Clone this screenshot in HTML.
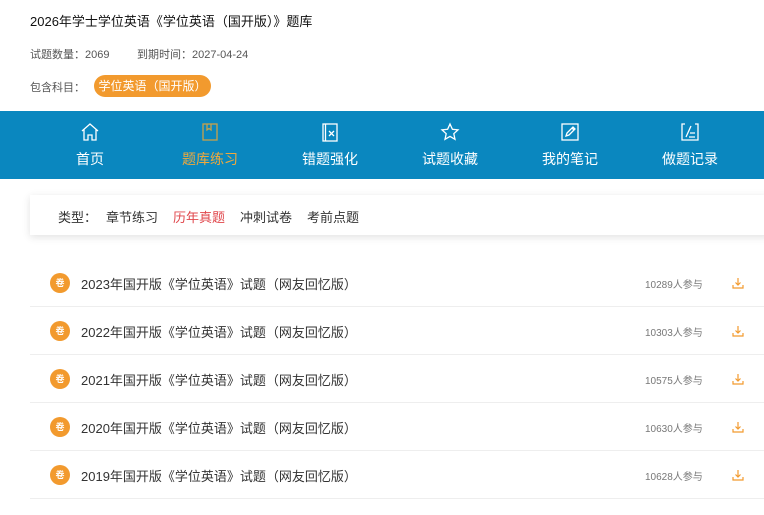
<!DOCTYPE html><html><head><meta charset="utf-8"><style>
body{margin:0;width:764px;height:515px;overflow:hidden;background:#fff;font-family:"Liberation Sans","Noto Sans CJK SC",sans-serif;position:relative}
.a{position:absolute;white-space:nowrap}
.nav{position:absolute;left:0;top:111px;width:764px;height:68px;background:#0a87bf}
.it{position:absolute;top:0;width:120px;height:68px;text-align:center;color:#fff;font-size:14px}
.it svg{position:absolute;left:50px;top:11px}
.it span{position:absolute;left:0;right:0;top:38px}
.row{position:absolute;left:30px;width:734px;height:47px;border-bottom:1px solid #eee}
.ic{position:absolute;left:20px;top:14px;width:20px;height:20px;border-radius:50%;background:#f29a2e;color:#fff;font-size:9px;text-align:center;line-height:20px;font-weight:bold}
.t{position:absolute;left:51px;top:15px;font-size:13px;color:#333}
.n{position:absolute;left:615px;top:17px;font-size:10px;color:#777}
.d{position:absolute;left:701px;top:17px}
</style></head><body>
<div class="a" style="left:30px;top:11px;font-size:13px;color:#111">2026年学士学位英语《学位英语（国开版）》题库</div>
<div class="a" style="left:30px;top:46px;font-size:11px;color:#555">试题数量：2069</div>
<div class="a" style="left:137px;top:46px;font-size:11px;color:#555">到期时间：2027-04-24</div>
<div class="a" style="left:30px;top:79px;font-size:11px;color:#555">包含科目：</div>
<div class="a" style="left:94px;top:75px;width:117px;height:22px;border-radius:11px;background:#f29a2e;color:#fff;font-size:12px;line-height:22px;text-align:center">学位英语（国开版）</div>
<div class="nav">
<div class="it" style="left:30px"><svg width="20" height="20" viewBox="0 0 20 20" fill="none" stroke="#fff" stroke-width="1.3"><path d="M2 9L10 2l8 7M4 7.5V18h4v-5h4v5h4V7.5"/></svg><span>首页</span></div>
<div class="it" style="left:150px;color:#f1a93c"><svg width="20" height="20" viewBox="0 0 20 20" fill="none" stroke="#c8a24a" stroke-width="1.3"><rect x="3" y="2" width="14" height="16"/><path d="M7 2v6l2-1.5L11 8V2"/></svg><span>题库练习</span></div>
<div class="it" style="left:270px"><svg width="20" height="20" viewBox="0 0 20 20" fill="none" stroke="#fff" stroke-width="1.3"><rect x="3" y="2" width="14" height="17"/><path d="M5.5 2v17M9 9l5 5M14 9l-5 5"/></svg><span>错题强化</span></div>
<div class="it" style="left:390px"><svg width="20" height="20" viewBox="0 0 20 20" fill="none" stroke="#fff" stroke-width="1.3"><path d="M10 2l2.4 5.3 5.6.6-4.2 3.8 1.2 5.6L10 14.4 5 17.3l1.2-5.6L2 7.9l5.6-.6z"/></svg><span>试题收藏</span></div>
<div class="it" style="left:510px"><svg width="20" height="20" viewBox="0 0 20 20" fill="none" stroke="#fff" stroke-width="1.3"><rect x="2" y="2" width="16" height="16"/><path d="M6 14l1-3 6-6 2 2-6 6zM12 6l2 2"/></svg><span>我的笔记</span></div>
<div class="it" style="left:630px"><svg width="20" height="20" viewBox="0 0 20 20" fill="none" stroke="#fff" stroke-width="1.3"><path d="M5 2H2v16h16V2h-3"/><path d="M6 15l5-11M10 11h5M9 15h6"/></svg><span>做题记录</span></div>
</div>
<div class="a" style="left:30px;top:195px;width:740px;height:40px;background:#fff;box-shadow:0 2px 8px rgba(0,0,0,.12)"></div>
<div class="a" style="left:58px;top:207px;font-size:13px;color:#333">类型：</div>
<div class="a" style="left:106px;top:207px;font-size:13px;color:#333">章节练习</div>
<div class="a" style="left:173px;top:207px;font-size:13px;color:#e0474c">历年真题</div>
<div class="a" style="left:240px;top:207px;font-size:13px;color:#333">冲刺试卷</div>
<div class="a" style="left:307px;top:207px;font-size:13px;color:#333">考前点题</div>
<div class="row" style="top:259px"><div class="ic">卷</div><div class="t">2023年国开版《学位英语》试题（网友回忆版）</div><div class="n">10289人参与</div><svg class="d" width="14" height="14" viewBox="0 0 14 14" fill="none" stroke="#f29a2e" stroke-width="1.2"><path d="M7 2v7M4.5 6.5L7 9l2.5-2.5M2 9v3h10V9"/></svg></div>
<div class="row" style="top:307px"><div class="ic">卷</div><div class="t">2022年国开版《学位英语》试题（网友回忆版）</div><div class="n">10303人参与</div><svg class="d" width="14" height="14" viewBox="0 0 14 14" fill="none" stroke="#f29a2e" stroke-width="1.2"><path d="M7 2v7M4.5 6.5L7 9l2.5-2.5M2 9v3h10V9"/></svg></div>
<div class="row" style="top:355px"><div class="ic">卷</div><div class="t">2021年国开版《学位英语》试题（网友回忆版）</div><div class="n">10575人参与</div><svg class="d" width="14" height="14" viewBox="0 0 14 14" fill="none" stroke="#f29a2e" stroke-width="1.2"><path d="M7 2v7M4.5 6.5L7 9l2.5-2.5M2 9v3h10V9"/></svg></div>
<div class="row" style="top:403px"><div class="ic">卷</div><div class="t">2020年国开版《学位英语》试题（网友回忆版）</div><div class="n">10630人参与</div><svg class="d" width="14" height="14" viewBox="0 0 14 14" fill="none" stroke="#f29a2e" stroke-width="1.2"><path d="M7 2v7M4.5 6.5L7 9l2.5-2.5M2 9v3h10V9"/></svg></div>
<div class="row" style="top:451px"><div class="ic">卷</div><div class="t">2019年国开版《学位英语》试题（网友回忆版）</div><div class="n">10628人参与</div><svg class="d" width="14" height="14" viewBox="0 0 14 14" fill="none" stroke="#f29a2e" stroke-width="1.2"><path d="M7 2v7M4.5 6.5L7 9l2.5-2.5M2 9v3h10V9"/></svg></div>
</body></html>
